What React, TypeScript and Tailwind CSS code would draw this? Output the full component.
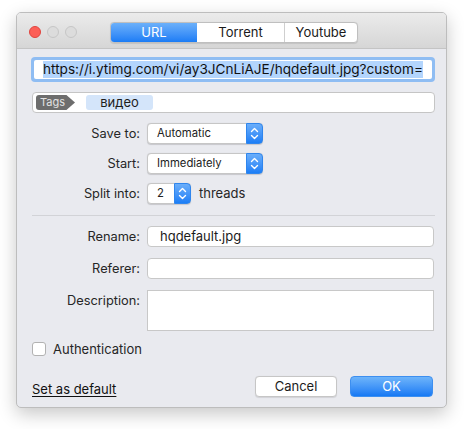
import React from "react";

const font = { fontFamily: 'Inter, "Liberation Sans", Arial, sans-serif' };

function Stepper() {
  return (
    <div className="w-[17px] self-stretch bg-gradient-to-b from-[#6aaefa] to-[#1a7ef6] rounded-r-[4px] flex items-center justify-center -mr-px -my-px border border-[#2f86ee]">
      <svg width="9" height="13" viewBox="0 0 9 13" fill="none">
        <path d="M1.5 4.5 L4.5 1.5 L7.5 4.5" stroke="white" strokeWidth="1.4" strokeLinecap="round" strokeLinejoin="round" />
        <path d="M1.5 8.5 L4.5 11.5 L7.5 8.5" stroke="white" strokeWidth="1.4" strokeLinecap="round" strokeLinejoin="round" />
      </svg>
    </div>
  );
}

function Select({ value, w }: { value: string; w: string }) {
  return (
    <div className={`${w} h-[21px] flex items-stretch bg-white border border-[#c6c6c6] rounded-[4px] shadow-[0_0.5px_1px_rgba(0,0,0,0.15)]`}>
      <div className="flex-1 flex items-center pl-[9px] text-[11.3px] text-[#222]">{value}</div>
      <Stepper />
    </div>
  );
}

function Label({ children }: { children: React.ReactNode }) {
  return (
    <div className="w-[108px] h-[21px] shrink-0 flex items-center justify-end text-[12.8px] text-[#262626]">{children}</div>
  );
}

export default function App() {
  return (
    <div className="w-[464px] h-[429px] bg-white pt-[12px] pl-[16px]" style={font}>
      <div className="w-[431px] h-[396px] flex flex-col rounded-[5px] overflow-hidden border border-[#bdbdbd] shadow-[0_6px_18px_rgba(0,0,0,0.22)] bg-[#e9eaef]">
        {/* Title bar */}
        <div className="h-[36px] shrink-0 flex items-start bg-gradient-to-b from-[#ebebeb] to-[#d6d6d6] border-b border-[#c4c4c4]">
          <div className="flex gap-[6px] mt-[13px] ml-[12px]">
            <div className="w-[12px] h-[12px] rounded-full bg-[#fc5f57] border border-[#e0443e]" />
            <div className="w-[12px] h-[12px] rounded-full bg-[#dcdcdc] border border-[#c6c6c6]" />
            <div className="w-[12px] h-[12px] rounded-full bg-[#dcdcdc] border border-[#c6c6c6]" />
          </div>
          <div className="ml-[33px] mt-[9px] flex h-[21px] rounded-[4px] border border-[#bfbfbf] bg-white overflow-hidden text-[13px] shadow-[0_0.5px_1px_rgba(0,0,0,0.1)]">
            <div className="w-[86px] flex items-center justify-center text-white bg-gradient-to-b from-[#6bb0fa] to-[#1a7cf5]">URL</div>
            <div className="w-[88px] flex items-center justify-center text-[#1a1a1a] border-r border-[#cfcfcf]">Torrent</div>
            <div className="w-[72px] flex items-center justify-center text-[#1a1a1a]">Youtube</div>
          </div>
        </div>

        {/* Body */}
        <div className="flex flex-col pl-[15px] pr-[12px]">
          {/* URL field */}
          <div className="mt-[8px] -ml-px w-[404px] h-[25px] rounded-[4px] bg-[#8fbdf3] p-[3px]">
            <div className="h-full bg-white rounded-[2px] overflow-hidden flex items-center pl-[9px] whitespace-nowrap">
              <span className="bg-[#b3d5fd] text-[13.6px] text-[#111] leading-[17px]">https://i.ytimg.com/vi/ay3JCnLiAJE/hqdefault.jpg?custom=</span>
            </div>
          </div>

          {/* Tags */}
          <div className="mt-[10px] w-[403px] h-[21px] bg-white border border-[#c5c5c5] rounded-[4px] flex items-center pl-[3px]">
            <div className="w-[39px] h-[15px] bg-[#6d6d6d] rounded-l-[3px] [clip-path:polygon(0_0,78%_0,100%_50%,78%_100%,0_100%)] text-[11px] text-[#e2e2e2] flex items-center pl-[4px]">Tags</div>
            <div className="ml-[11px] w-[67px] h-[15px] bg-[#d4e5fa] rounded-[3px] text-[13px] text-[#1c1c1c] flex items-center justify-center">видео</div>
          </div>

          {/* Save to */}
          <div className="mt-[10px] flex gap-[7px] items-center">
            <Label>Save to:</Label>
            <Select value="Automatic" w="w-[116px]" />
          </div>
          <div className="mt-[9px] flex gap-[7px] items-center">
            <Label>Start:</Label>
            <Select value="Immediately" w="w-[116px]" />
          </div>
          <div className="mt-[9px] flex gap-[7px] items-center">
            <Label>Split into:</Label>
            <Select value="2" w="w-[44px]" />
            <span className="ml-[1px] text-[13px] text-[#262626]">threads</span>
          </div>

          <div className="mt-[11px] h-px w-[403px] bg-[#d2d3d7]" />

          <div className="mt-[10px] flex gap-[7px] items-center">
            <Label>Rename:</Label>
            <div className="w-[288px] h-[21px] bg-white border border-[#c8c8c8] rounded-[4px] flex items-center pl-[12px] text-[13px] text-[#1c1c1c]">hqdefault.jpg</div>
          </div>
          <div className="mt-[11px] flex gap-[7px] items-center">
            <Label>Referer:</Label>
            <div className="w-[288px] h-[21px] bg-white border border-[#c8c8c8] rounded-[4px]" />
          </div>
          <div className="mt-[11px] flex gap-[7px] items-start">
            <Label>Description:</Label>
            <div className="w-[288px] h-[41px] bg-white border border-[#c8c8c8]" />
          </div>

          <div className="mt-[11px] h-[14px] flex items-center gap-[7px]">
            <div className="w-[14px] h-[14px] bg-white border border-[#b2b2b2] rounded-[3px]" />
            <span className="text-[13px] leading-[14px] text-[#262626]">Authentication</span>
          </div>

          <div className="mt-[20px] h-[21px] flex items-center">
            <span className="text-[13px] leading-[16px] text-[#111] underline underline-offset-[2px] mt-[4px]">Set as default</span>
            <div className="flex-1" />
            <div className="w-[82px] h-[21px] bg-white border border-[#c6c6c6] rounded-[4px] flex items-center justify-center text-[13px] text-[#1c1c1c] shadow-[0_0.5px_1px_rgba(0,0,0,0.1)]">Cancel</div>
            <div className="ml-[13px] mr-[1px] w-[83px] h-[21px] rounded-[4px] bg-gradient-to-b from-[#6db4fa] to-[#1479f4] border border-[#3d8ff0] flex items-center justify-center text-[13px] text-white">OK</div>
          </div>
        </div>
      </div>
    </div>
  );
}
